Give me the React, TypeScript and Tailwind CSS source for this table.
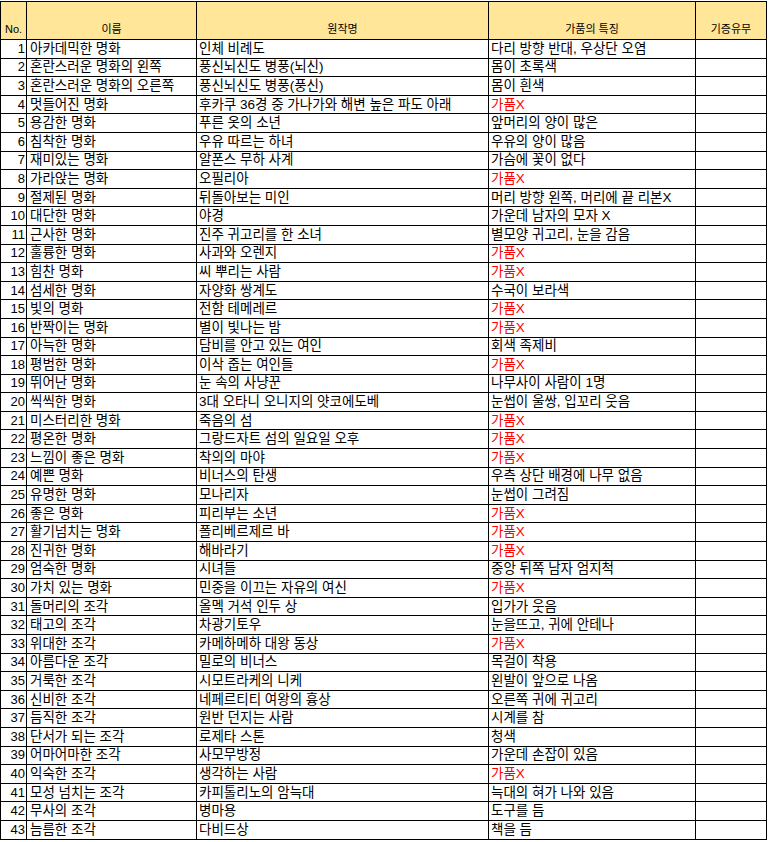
import React from "react";

const ROWS: [string, string, string][] = [
    ["아카데믹한 명화", "인체 비례도", "다리 방향 반대, 우상단 오염"],
    ["혼란스러운 명화의 왼쪽", "풍신뇌신도 병풍(뇌신)", "몸이 초록색"],
    ["혼란스러운 명화의 오른쪽", "풍신뇌신도 병풍(풍신)", "몸이 흰색"],
    ["멋들어진 명화", "후카쿠 36경 중 가나가와 해변 높은 파도 아래", "가품X"],
    ["용감한 명화", "푸른 옷의 소년", "앞머리의 양이 많은"],
    ["침착한 명화", "우유 따르는 하녀", "우유의 양이 많음"],
    ["재미있는 명화", "알폰스 무하 사계", "가슴에 꽃이 없다"],
    ["가라앉는 명화", "오필리아", "가품X"],
    ["절제된 명화", "뒤돌아보는 미인", "머리 방향 왼쪽, 머리에 끝 리본X"],
    ["대단한 명화", "야경", "가운데 남자의 모자 X"],
    ["근사한 명화", "진주 귀고리를 한 소녀", "별모양 귀고리, 눈을 감음"],
    ["훌륭한 명화", "사과와 오렌지", "가품X"],
    ["힘찬 명화", "씨 뿌리는 사람", "가품X"],
    ["섬세한 명화", "자양화 쌍계도", "수국이 보라색"],
    ["빛의 명화", "전함 테메레르", "가품X"],
    ["반짝이는 명화", "별이 빛나는 밤", "가품X"],
    ["아늑한 명화", "담비를 안고 있는 여인", "회색 족제비"],
    ["평범한 명화", "이삭 줍는 여인들", "가품X"],
    ["뛰어난 명화", "눈 속의 사냥꾼", "나무사이 사람이 1명"],
    ["씩씩한 명화", "3대 오타니 오니지의 얏코에도베", "눈썹이 울쌍, 입꼬리 웃음"],
    ["미스터리한 명화", "죽음의 섬", "가품X"],
    ["평온한 명화", "그랑드자트 섬의 일요일 오후", "가품X"],
    ["느낌이 좋은 명화", "착의의 마야", "가품X"],
    ["예쁜 명화", "비너스의 탄생", "우측 상단 배경에 나무 없음"],
    ["유명한 명화", "모나리자", "눈썹이 그려짐"],
    ["좋은 명화", "피리부는 소년", "가품X"],
    ["활기넘치는 명화", "폴리베르제르 바", "가품X"],
    ["진귀한 명화", "해바라기", "가품X"],
    ["엄숙한 명화", "시녀들", "중앙 뒤쪽 남자 엄지척"],
    ["가치 있는 명화", "민중을 이끄는 자유의 여신", "가품X"],
    ["돌머리의 조각", "올멕 거석 인두 상", "입가가 웃음"],
    ["태고의 조각", "차광기토우", "눈을뜨고, 귀에 안테나"],
    ["위대한 조각", "카메하메하 대왕 동상", "가품X"],
    ["아름다운 조각", "밀로의 비너스", "목걸이 착용"],
    ["거룩한 조각", "시모트라케의 니케", "왼발이 앞으로 나옴"],
    ["신비한 조각", "네페르티티 여왕의 흉상", "오른쪽 귀에 귀고리"],
    ["듬직한 조각", "원반 던지는 사람", "시계를 참"],
    ["단서가 되는 조각", "로제타 스톤", "청색"],
    ["어마어마한 조각", "사모무방정", "가운데 손잡이 있음"],
    ["익숙한 조각", "생각하는 사람", "가품X"],
    ["모성 넘치는 조각", "카피톨리노의 암늑대", "늑대의 혀가 나와 있음"],
    ["무사의 조각", "병마용", "도구를 듬"],
    ["늠름한 조각", "다비드상", "책을 듬"],
];

const HEADERS = ["No.", "이름", "원작명", "가품의 특징", "기증유무"];

const cell = "border-r border-b border-black flex items-center overflow-hidden whitespace-nowrap h-[18.6px]";

export default function App() {
    return (
        <div className="bg-white min-h-screen pt-px" style={{ fontFamily: '"Liberation Sans", "Noto Sans CJK KR", sans-serif' }}>
            <div className="grid grid-cols-[26px_170px_292px_207px_71px] w-[767px] border-l border-t border-black text-black">
                {/* Header */}
                {HEADERS.map(h => (
                    <div key={h} className="h-[38px] bg-[#FFE699] border-r border-b border-black flex items-end justify-center pb-[3px] text-[11px] leading-[13px]">
                        {h}
                    </div>
                ))}

                {/* Body */}
                {ROWS.map(([name, orig, fake], idx) => (
                    <React.Fragment key={idx}>
                        <div className={`${cell} justify-end pr-[1px] text-[13px] leading-[16px]`}>{idx + 1}</div>
                        <div className={`${cell} pl-[3px] text-[13.5px] leading-[16px]`}>{name}</div>
                        <div className={`${cell} pl-[2px] text-[13.5px] leading-[16px]`}>{orig}</div>
                        <div className={`${cell} pl-[2px] text-[13.5px] leading-[16px] ${fake === "가품X" ? "text-[#FF0000]" : ""}`}>{fake}</div>
                        <div className={cell} />
                    </React.Fragment>
                ))}
            </div>
        </div>
    );
}
